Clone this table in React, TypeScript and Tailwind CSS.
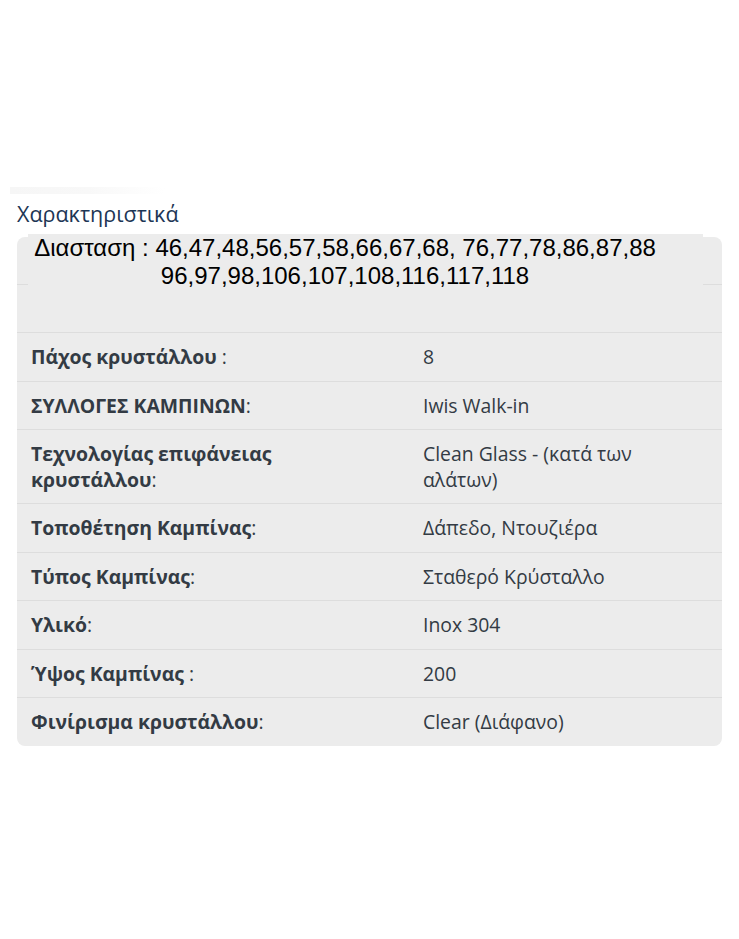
const rows: { label: string; colon: string; value: string }[] = [
  { label: "Πάχος κρυστάλλου", colon: " :", value: "8" },
  { label: "ΣΥΛΛΟΓΕΣ ΚΑΜΠΙΝΩΝ", colon: ":", value: "Iwis Walk-in" },
  { label: "Τεχνολογίας επιφάνειας κρυστάλλου", colon: ":", value: "Clean Glass - (κατά των αλάτων)" },
  { label: "Τοποθέτηση Καμπίνας", colon: ":", value: "Δάπεδο, Ντουζιέρα" },
  { label: "Τύπος Καμπίνας", colon: ":", value: "Σταθερό Κρύσταλλο" },
  { label: "Υλικό", colon: ":", value: "Inox 304" },
  { label: "Ύψος Καμπίνας", colon: " :", value: "200" },
  { label: "Φινίρισμα κρυστάλλου", colon: ":", value: "Clear (Διάφανο)" },
];

export default function App() {
  return (
    <div className="min-h-[939px] bg-white pt-[187px] font-['Open_Sans',sans-serif]">
      <div className="ml-[10px] h-[7px] w-[155px] bg-gradient-to-r from-[#f6f6f6] via-[#f8f8f8] to-white" />
      <h3 className="ml-[17px] mt-[6px] text-[21.5px] leading-[28px] text-[#1d3655]">Χαρακτηριστικά</h3>
      <div className="relative mx-[17px] mt-[9px] rounded-lg bg-[#ececec] text-[19.4px] text-[#333b44]">
        <div className="h-[48px] border-b border-[#dddddd]" />
        <div className="h-[48px] border-b border-[#dddddd]" />
        <div className="absolute left-[11px] top-[-3px] w-[675px] bg-[#ececec] pr-[41px] text-center font-['Liberation_Sans',Arial,sans-serif] text-[24px] leading-[28px] text-black">
          Διασταση : 46,47,48,56,57,58,66,67,68, 76,77,78,86,87,88
          <br />
          96,97,98,106,107,108,116,117,118
        </div>
        {rows.map((r, i) => (
          <div
            key={r.label}
            className={`grid grid-cols-[392px_1fr] ${i < rows.length - 1 ? "border-b border-[#dddddd]" : ""}`}
          >
            <div className="py-[11px] pl-[14px] pr-[48px] leading-[25.5px]">
              <span className="font-bold">
                {r.label}
                <span className="font-normal">{r.colon}</span>
              </span>
            </div>
            <div className="py-[11px] pl-[14px] pr-[40px] leading-[25.5px]">{r.value}</div>
          </div>
        ))}
      </div>
    </div>
  );
}
